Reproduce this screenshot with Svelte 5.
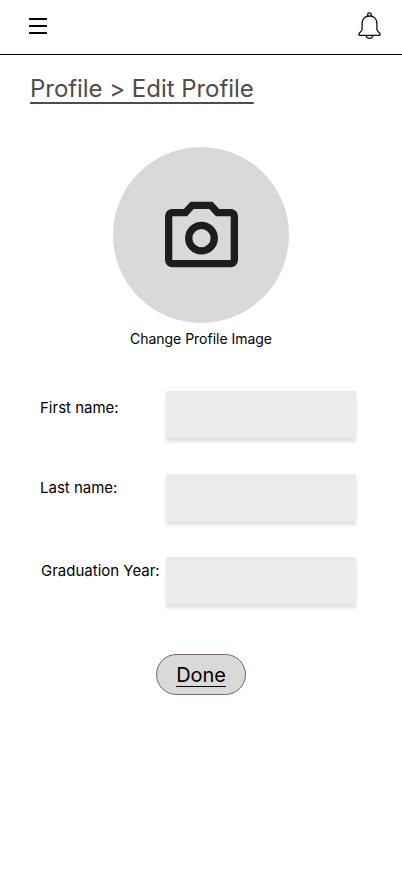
<script>
  const fields = [
    { id: 'first', label: 'First name:', top: 7, left: 40 },
    { id: 'last', label: 'Last name:', top: 4, left: 40 },
    { id: 'year', label: 'Graduation Year:', top: 4, left: 41 }
  ];
</script>

<div class="screen">
  <header>
    <button class="menu" aria-label="Menu"><span></span><span></span><span></span></button>
    <button class="bell" aria-label="Notifications">
      <svg width="24" height="28" viewBox="0 0 24 28" fill="none" stroke="#111" stroke-width="1.3" stroke-linejoin="round">
        <path d="M9.700 4.300V2.600a1.800 1.800 0 0 1 3.600 0v1.700" />
        <path d="M4.100 11.200C4.100 6.800 7.200 4 11.500 4s7.400 2.800 7.400 7.200v6.100c0 2.300 3.300 3 3.300 5.200 0 .6-.4.900-1 .9H1.800c-.6 0-1-.3-1-.9 0-2.200 3.300-2.900 3.300-5.200z" />
        <path d="M8.100 23.500c.2 1.800 1.500 2.800 3.400 2.800s3.200-1 3.400-2.800" />
      </svg>
    </button>
  </header>

  <h1>Profile &gt; Edit Profile</h1>

  <div class="photo">
    <div class="avatar">
      <svg width="88" height="88" viewBox="0 0 88 88" fill="#1d1d1d">
        <g transform="translate(0.7 -0.3) scale(3.65)">
          <path fill-rule="evenodd" d="M4 21q-.825 0-1.412-.587T2 19V7q0-.825.588-1.412T4 5h3.150L9 3h6l1.850 2H20q.825 0 1.413.588T22 7v12q0 .825-.587 1.413T20 21zm0-2h16V7h-4.050l-1.825-2h-4.250L8.050 7H4z" />
          <circle cx="12" cy="13" r="3.500" fill="none" stroke="#1d1d1d" stroke-width="2" />
        </g>
      </svg>
    </div>
    <p>Change Profile Image</p>
  </div>

  <form>
    {#each fields as field}
      <div class="row">
        <label for={field.id} style="padding-top: {field.top}px; padding-left: {field.left}px">{field.label}</label>
        <input id={field.id} type="text" />
      </div>
    {/each}
    <button class="done" type="button"><span>Done</span></button>
  </form>
</div>

<style>
  :global(body) { margin: 0; background: #fff; }
  .screen {
    width: 402px;
    height: 874px;
    overflow: hidden;
    background: #fff;
    color: #000;
    font-family: Inter, "Liberation Sans", sans-serif;
  }
  button { padding: 0; border: 0; background: none; font: inherit; color: inherit; }
  header {
    box-sizing: border-box;
    height: 55px;
    padding: 12px 20px 0 29px;
    border-bottom: 1px solid #000;
    display: flex;
    justify-content: space-between;
    align-items: flex-start;
  }
  .menu { display: flex; flex-direction: column; gap: 5px; width: 18px; padding-top: 6px; }
  .menu span { height: 2px; background: #000; }
  .bell { width: 24px; height: 28px; }
  .bell svg { display: block; }
  h1 {
    margin: 19px 0 0 30px;
    font-size: 24px;
    line-height: 29px;
    font-weight: 400;
    letter-spacing: -0.04px;
    color: #4d4d4d;
    text-decoration: underline;
    text-decoration-thickness: 1.5px;
    text-underline-offset: 4.5px;
    text-decoration-skip-ink: none;
    white-space: nowrap;
  }
  .photo { margin-top: 44px; padding-left: 113px; width: 176px; }
  .avatar {
    height: 176px;
    border-radius: 50%;
    background: #d9d9d9;
    display: flex;
    align-items: center;
    justify-content: center;
  }
  .avatar svg { display: block; }
  p { margin: 7px 0 0; font-size: 14px; line-height: 18px; letter-spacing: -0.02px; text-align: center; white-space: nowrap; }
  form { margin-top: 43px; display: flex; flex-direction: column; gap: 36px; }
  .row { display: flex; height: 47px; }
  label {
    box-sizing: border-box;
    width: 166px;
    font-size: 15px;
    line-height: 20px;
    white-space: nowrap;
  }
  input {
    box-sizing: border-box;
    width: 190px;
    height: 47px;
    margin: 0;
    border: 0;
    border-radius: 0;
    background: #ebebeb;
    box-shadow: 0 4px 4px rgba(0, 0, 0, 0.13);
  }
  .done {
    box-sizing: border-box;
    width: 90px;
    height: 41px;
    margin: 14px 0 0 156px;
    border: 1px solid #7d6265;
    border-radius: 21px;
    background: #d9d9d9;
    font-size: 20px;
    line-height: 24px;
    letter-spacing: -0.05px;
    text-decoration: underline;
    text-decoration-thickness: 1px;
    text-underline-offset: 4px;
  }
</style>
